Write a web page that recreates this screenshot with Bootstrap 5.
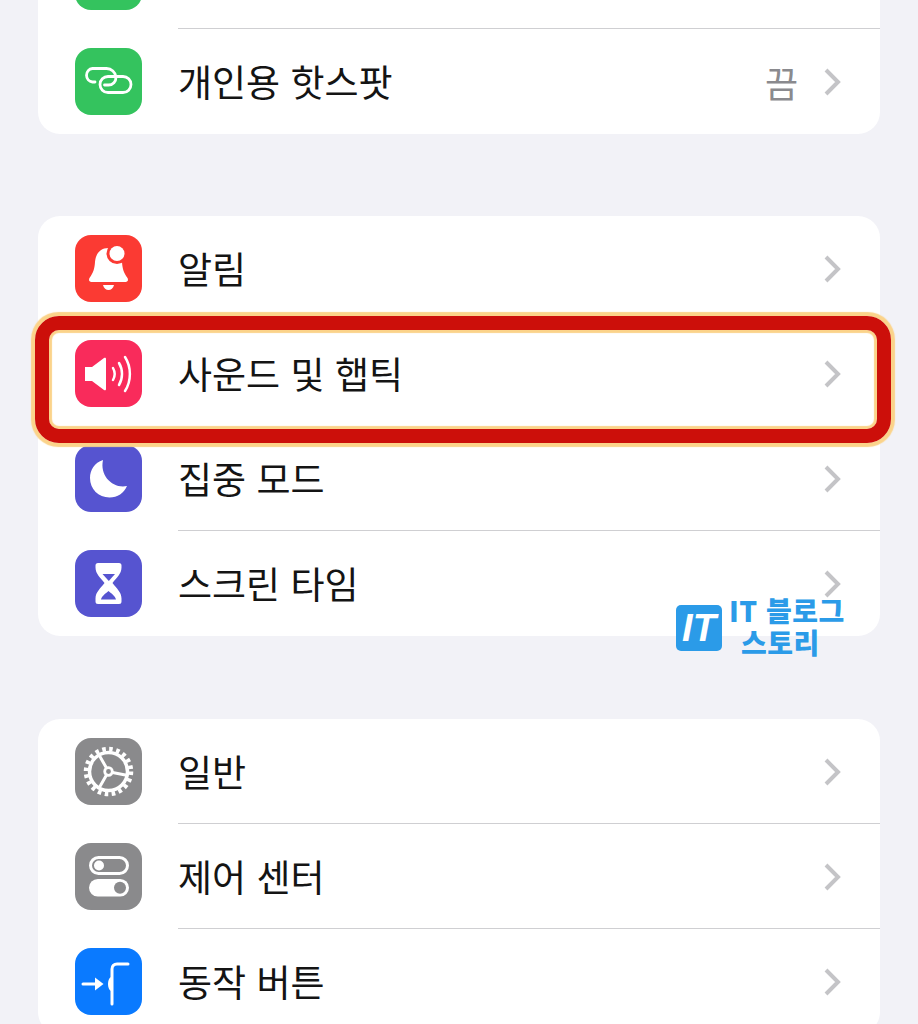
<!DOCTYPE html>
<html lang="ko">
<head>
    <meta charset="UTF-8">
    <meta name="viewport" content="width=device-width, initial-scale=1.0">
    <title>설정</title>
    <link href="https://cdn.jsdelivr.net/npm/bootstrap@5.3.0/dist/css/bootstrap.min.css" rel="stylesheet">
    <style>
        html, body { height: 100%; }
        body {
            background: #f2f2f7;
            overflow: hidden;
            font-family: "Noto Sans CJK KR", "Liberation Sans", sans-serif;
        }
        .settings-page {
            position: relative;
            height: 1024px;
            overflow: hidden;
            padding: 0 38px;
        }
        .settings-group {
            border: 0;
            border-radius: 22px;
            margin-bottom: 83px;
            overflow: visible;
        }
        .settings-group.first-group { margin-top: -76px; margin-bottom: 82px; }
        .settings-row {
            position: relative;
            height: 105px;
            padding: 0 38px 0 37px;
            border: 0;
            background: #fff;
            display: flex;
            align-items: center;
            color: #141414;
        }
        .settings-row:not(:last-child):not(.no-sep)::after {
            content: "";
            position: absolute;
            left: 140px;
            right: 0;
            bottom: 0;
            height: 1.5px;
            background: #cfcfd2;
        }
        .row-icon {
            width: 67px;
            height: 67px;
            border-radius: 16px;
            flex: none;
            display: block;
        }
        .row-label {
            margin-left: 36px;
            font-size: 37px;
            line-height: 1;
            flex-grow: 1;
        }
        .row-value {
            font-size: 36px;
            line-height: 1;
            color: #8a8a8e;
            margin-right: 26px;
        }
        .row-chevron { width: 18px; height: 28px; flex: none; }
        .icon-green { background: #34c35e; }
        .icon-red { background: #fb3a33; }
        .icon-pink { background: #f92b5b; }
        .icon-indigo { background: #5654d0; }
        .icon-gray { background: #8a8a8c; }
        .icon-blue { background: #0a7aff; }
        .row-highlight {
            position: absolute;
            top: -5px;
            left: -3px;
            right: -11px;
            bottom: -17px;
            border: 14px solid #cc0f0a;
            border-radius: 24px;
            box-shadow: 0 0 1px 3.5px #fbd38a, inset 0 0 1px 3px #fbd38a;
            z-index: 5;
            pointer-events: none;
        }
        .blog-mark {
            position: absolute;
            left: 676px;
            top: 594px;
            display: flex;
            align-items: flex-start;
            gap: 7px;
            color: #2b9be8;
            z-index: 6;
        }
        .blog-logo {
            width: 46px;
            height: 46px;
            margin-top: 11px;
            border-radius: 5px;
            background: #2b9be8;
            color: #fff;
            font: italic 700 38px/46px "Liberation Sans", sans-serif;
            text-align: center;
        }
        .blog-name {
            font-size: 28px;
            font-weight: 900;
            white-space: nowrap;
        }
        .blog-line {
            height: 32px;
            line-height: 32px;
            letter-spacing: .5px;
        }
        .blog-line.second-line { margin-left: 12px; }
    </style>
</head>
<body>
    <div class="settings-page">
        <ul class="list-group settings-group first-group">
            <li class="list-group-item settings-row">
                <span class="row-icon icon-green"></span>
                <span class="row-label"></span>
            </li>
            <li class="list-group-item settings-row">
                <svg class="row-icon icon-green" viewBox="0 0 67 67" fill="none" stroke="#fff" stroke-width="2.800" stroke-linecap="round">
                    <path d="M20 34h-2.500a6.800 6.800 0 0 1 0-13.500h14a9.500 9.500 0 0 1 9.500 8.500c0 4.500-3 8-7.500 8h-4"/>
                    <rect x="25" y="28.500" width="31" height="16" rx="8"/>
                </svg>
                <span class="row-label">개인용 핫스팟</span>
                <span class="row-value">끔</span>
                <svg class="row-chevron" viewBox="0 0 18 28" fill="none" stroke="#c4c4c7" stroke-width="4"><path d="M2 2l12 12-12 12"/></svg>
            </li>
        </ul>

        <ul class="list-group settings-group">
            <li class="list-group-item settings-row">
                <svg class="row-icon icon-red" viewBox="0 0 67 67" fill="#fff">
                    <path d="M33.500 13c-9 0-13 7-13.500 14-.5 7-1.500 10-5.500 16-1 1.800-.4 4 2 4h34c2.400 0 3-2.200 2-4-4-6-5-9-5.500-16-.5-7-4.500-14-13.500-14z"/>
                    <path d="M28 50h11c-.8 3.200-3 5-5.500 5s-4.700-1.800-5.500-5z"/>
                    <circle cx="42" cy="18.500" r="10.500" fill="#fb3a33"/>
                    <circle cx="42" cy="18.500" r="7.500"/>
                </svg>
                <span class="row-label">알림</span>
                <svg class="row-chevron" viewBox="0 0 18 28" fill="none" stroke="#c4c4c7" stroke-width="4"><path d="M2 2l12 12-12 12"/></svg>
            </li>
            <li class="list-group-item settings-row no-sep">
                <svg class="row-icon icon-pink" viewBox="0 0 67 67" fill="none" stroke="#fff" stroke-linecap="round">
                    <path fill="#fff" stroke="none" d="M10 27h7l12-9c1.200-.8 2-.2 2 1v30c0 1.200-.8 1.800-2 1l-12-9h-7z"/>
                    <path stroke-width="2.500" d="M38 28c2 3.500 2 8.500 0 12"/>
                    <path stroke-width="2.500" d="M44 23c4 6.500 4 15.500 0 22"/>
                    <path stroke-width="2.500" d="M50 17c6.500 10 6.500 24 0 34"/>
                </svg>
                <span class="row-label">사운드 및 햅틱</span>
                <svg class="row-chevron" viewBox="0 0 18 28" fill="none" stroke="#c4c4c7" stroke-width="4"><path d="M2 2l12 12-12 12"/></svg>
                <span class="row-highlight"></span>
            </li>
            <li class="list-group-item settings-row">
                <svg class="row-icon icon-indigo" viewBox="0 0 67 67" fill="#fff">
                    <path d="M28 15C19.500 17.500 15 25 15 33c0 11 8.500 19.500 19.500 19.500 8 0 14.500-4.500 17.500-11.500-14 3-27.500-10-24-26z"/>
                </svg>
                <span class="row-label">집중 모드</span>
                <svg class="row-chevron" viewBox="0 0 18 28" fill="none" stroke="#c4c4c7" stroke-width="4"><path d="M2 2l12 12-12 12"/></svg>
            </li>
            <li class="list-group-item settings-row">
                <svg class="row-icon icon-indigo" viewBox="0 0 67 67" fill="#fff">
                    <path d="M23 13h21a2.500 2.500 0 0 1 2.500 2.500v2c0 6.500-5 10-9 15.500 4 5.500 9 9 9 15.500v3a2.500 2.500 0 0 1-2.500 2.500H23a2.500 2.500 0 0 1-2.500-2.500v-3c0-6.500 5-10 9-15.500-4-5.500-9-9-9-15.500v-2a2.500 2.500 0 0 1 2.500-2.500z"/>
                    <path fill="#5654d0" d="M27.500 24h12.500l-6.200 7z"/>
                    <path fill="#5654d0" d="M26 49.500c.8-3.500 4.500-6 7.500-8.500 3 2.500 6.700 5 7.500 8.500z"/>
                </svg>
                <span class="row-label">스크린 타임</span>
                <svg class="row-chevron" viewBox="0 0 18 28" fill="none" stroke="#c4c4c7" stroke-width="4"><path d="M2 2l12 12-12 12"/></svg>
            </li>
        </ul>

        <ul class="list-group settings-group">
            <li class="list-group-item settings-row">
                <svg class="row-icon icon-gray" viewBox="0 0 67 67" fill="none" stroke="#fff">
                    <circle cx="33.500" cy="33.500" r="22.500" stroke-width="4.500" stroke-dasharray="3.600 3.470"/>
                    <circle cx="33.500" cy="33.500" r="19" stroke-width="3.500"/>
                    <circle cx="33.500" cy="33.500" r="3.800" stroke-width="2.800"/>
                    <path stroke-width="3" d="M31.500 30L23.500 16M37.500 34.500L53 37.500M31.500 37L23.500 51"/>
                </svg>
                <span class="row-label">일반</span>
                <svg class="row-chevron" viewBox="0 0 18 28" fill="none" stroke="#c4c4c7" stroke-width="4"><path d="M2 2l12 12-12 12"/></svg>
            </li>
            <li class="list-group-item settings-row">
                <svg class="row-icon icon-gray" viewBox="0 0 67 67" fill="none">
                    <rect x="15.500" y="14.500" width="37" height="16" rx="8" stroke="#fff" stroke-width="3"/>
                    <circle cx="24" cy="22.500" r="5" fill="#fff"/>
                    <rect x="14" y="36" width="40" height="17.500" rx="8.750" fill="#fff"/>
                    <circle cx="45" cy="44.750" r="6" fill="#8a8a8c"/>
                </svg>
                <span class="row-label">제어 센터</span>
                <svg class="row-chevron" viewBox="0 0 18 28" fill="none" stroke="#c4c4c7" stroke-width="4"><path d="M2 2l12 12-12 12"/></svg>
            </li>
            <li class="list-group-item settings-row">
                <svg class="row-icon icon-blue" viewBox="0 0 67 67" fill="none" stroke="#fff" stroke-linecap="round">
                    <path stroke-width="3" d="M8 36h14"/>
                    <path fill="#fff" stroke="none" d="M20 29.500l8.500 6.500-8.500 6.500z"/>
                    <path stroke-width="3" d="M53 16h-11c-3 0-5 2-5 5v35"/>
                    <path fill="#fff" stroke="none" d="M36 29c-2 1-3 4-3 7s1 6 3 7z"/>
                </svg>
                <span class="row-label">동작 버튼</span>
                <svg class="row-chevron" viewBox="0 0 18 28" fill="none" stroke="#c4c4c7" stroke-width="4"><path d="M2 2l12 12-12 12"/></svg>
            </li>
        </ul>

        <div class="blog-mark">
            <div class="blog-logo">IT</div>
            <div class="blog-name">
                <div class="blog-line">IT 블로그</div>
                <div class="blog-line second-line">스토리</div>
            </div>
        </div>
    </div>
    <script src="https://cdn.jsdelivr.net/npm/bootstrap@5.3.0/dist/js/bootstrap.bundle.min.js"></script>
</body>
</html>
